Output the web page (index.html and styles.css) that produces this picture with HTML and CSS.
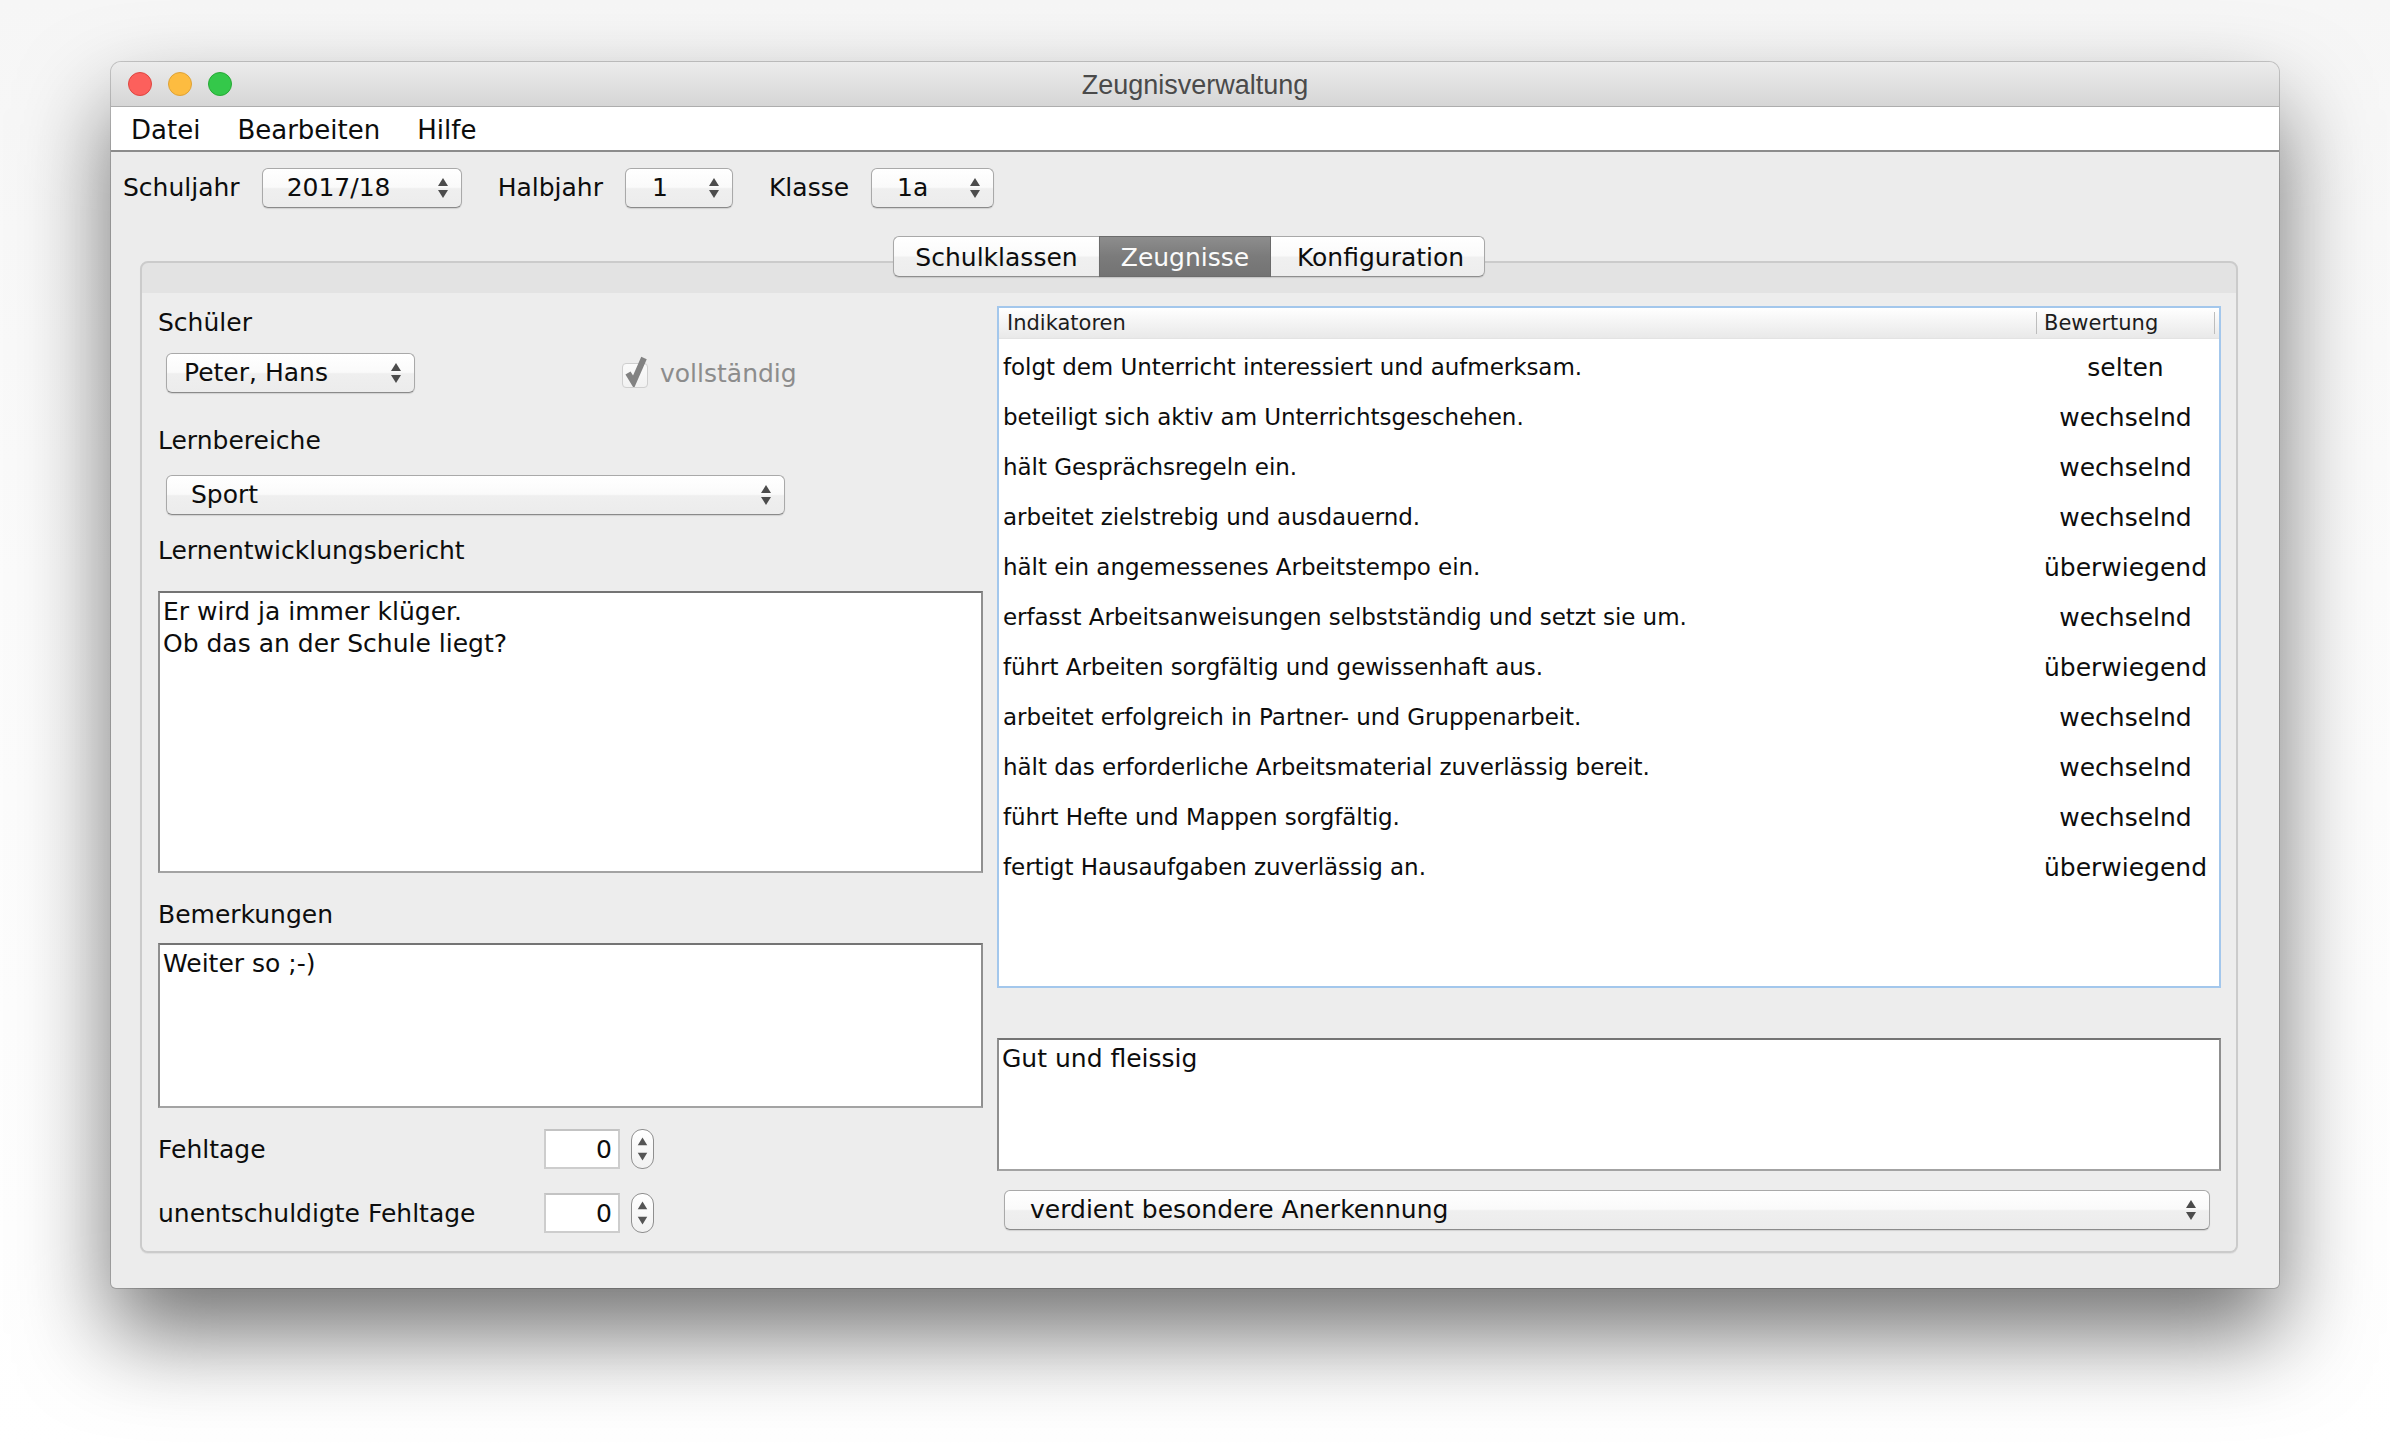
FILE: index.html
```html
<!DOCTYPE html>
<html lang="de">
<head>
<meta charset="utf-8">
<title>Zeugnisverwaltung</title>
<link rel="stylesheet" href="styles.css">
</head>
<body>
<div class="stage">
  <div class="window">
    <div class="titlebar">
      <div class="lights">
        <span class="light red"></span>
        <span class="light yellow"></span>
        <span class="light green"></span>
      </div>
      <div class="title">Zeugnisverwaltung</div>
      <div class="spacer"></div>
    </div>
    <div class="menubar">
      <span class="menu-item">Datei</span>
      <span class="menu-item">Bearbeiten</span>
      <span class="menu-item">Hilfe</span>
    </div>
    <div class="toolbar">
      <span class="tb-label">Schuljahr</span>
      <div class="combo combo-year"><span class="combo-text">2017/18</span><svg class="arrows" viewBox="0 0 10 20"><path d="M0 8 L5 0 L10 8 Z M0 12 L10 12 L5 20 Z"/></svg></div>
      <span class="tb-label">Halbjahr</span>
      <div class="combo combo-half"><span class="combo-text">1</span><svg class="arrows" viewBox="0 0 10 20"><path d="M0 8 L5 0 L10 8 Z M0 12 L10 12 L5 20 Z"/></svg></div>
      <span class="tb-label">Klasse</span>
      <div class="combo combo-class"><span class="combo-text">1a</span><svg class="arrows" viewBox="0 0 10 20"><path d="M0 8 L5 0 L10 8 Z M0 12 L10 12 L5 20 Z"/></svg></div>
    </div>
    <div class="tabpane">
      <div class="tabs">
        <span class="tab tab-first">Schulklassen</span>
        <span class="tab tab-active">Zeugnisse</span>
        <span class="tab tab-last">Konfiguration</span>
      </div>
      <div class="panel">
        <div class="panel-body">
          <div class="leftcol">
            <div class="label lbl-schueler">Schüler</div>
            <div class="row-schueler">
              <div class="combo combo-student"><span class="combo-text">Peter, Hans</span><svg class="arrows" viewBox="0 0 10 20"><path d="M0 8 L5 0 L10 8 Z M0 12 L10 12 L5 20 Z"/></svg></div>
              <div class="check">
                <span class="checkbox"><svg class="checkmark" viewBox="0 0 24 32"><path d="M4 18 L9.5 27 L20 3" /></svg></span>
                <span class="check-label">vollständig</span>
              </div>
            </div>
            <div class="label lbl-lern">Lernbereiche</div>
            <div class="combo combo-sport"><span class="combo-text">Sport</span><svg class="arrows" viewBox="0 0 10 20"><path d="M0 8 L5 0 L10 8 Z M0 12 L10 12 L5 20 Z"/></svg></div>
            <div class="label lbl-bericht">Lernentwicklungsbericht</div>
            <div class="textarea ta-bericht">Er wird ja immer klüger.<br>Ob das an der Schule liegt?</div>
            <div class="label lbl-bem">Bemerkungen</div>
            <div class="textarea ta-bem">Weiter so ;-)</div>
            <div class="spin-row spin-first">
              <span class="spin-label">Fehltage</span>
              <span class="spin-field">0</span>
              <span class="stepper"><svg viewBox="0 0 22 40"><path d="M6 16 L11 8 L16 16 Z M6 24 L16 24 L11 32 Z"/></svg></span>
            </div>
            <div class="spin-row spin-second">
              <span class="spin-label">unentschuldigte Fehltage</span>
              <span class="spin-field">0</span>
              <span class="stepper"><svg viewBox="0 0 22 40"><path d="M6 16 L11 8 L16 16 Z M6 24 L16 24 L11 32 Z"/></svg></span>
            </div>
          </div>
          <div class="rightcol">
            <div class="table">
              <div class="thead">
                <span class="th th-ind">Indikatoren</span>
                <span class="th th-val">Bewertung</span>
                <span class="th th-end"></span>
              </div>
              <div class="tbody">
                <div class="tr"><span class="td-ind">folgt dem Unterricht interessiert und aufmerksam.</span><span class="td-val">selten</span></div>
                <div class="tr"><span class="td-ind">beteiligt sich aktiv am Unterrichtsgeschehen.</span><span class="td-val">wechselnd</span></div>
                <div class="tr"><span class="td-ind">hält Gesprächsregeln ein.</span><span class="td-val">wechselnd</span></div>
                <div class="tr"><span class="td-ind">arbeitet zielstrebig und ausdauernd.</span><span class="td-val">wechselnd</span></div>
                <div class="tr"><span class="td-ind">hält ein angemessenes Arbeitstempo ein.</span><span class="td-val">überwiegend</span></div>
                <div class="tr"><span class="td-ind">erfasst Arbeitsanweisungen selbstständig und setzt sie um.</span><span class="td-val">wechselnd</span></div>
                <div class="tr"><span class="td-ind">führt Arbeiten sorgfältig und gewissenhaft aus.</span><span class="td-val">überwiegend</span></div>
                <div class="tr"><span class="td-ind">arbeitet erfolgreich in Partner- und Gruppenarbeit.</span><span class="td-val">wechselnd</span></div>
                <div class="tr"><span class="td-ind">hält das erforderliche Arbeitsmaterial zuverlässig bereit.</span><span class="td-val">wechselnd</span></div>
                <div class="tr"><span class="td-ind">führt Hefte und Mappen sorgfältig.</span><span class="td-val">wechselnd</span></div>
                <div class="tr"><span class="td-ind">fertigt Hausaufgaben zuverlässig an.</span><span class="td-val">überwiegend</span></div>
              </div>
            </div>
            <div class="textarea ta-gut">Gut und fleissig</div>
            <div class="combo combo-verdient"><span class="combo-text">verdient besondere Anerkennung</span><svg class="arrows" viewBox="0 0 10 20"><path d="M0 8 L5 0 L10 8 Z M0 12 L10 12 L5 20 Z"/></svg></div>
          </div>
        </div>
      </div>
    </div>
  </div>
</div>
</body>
</html>
```

FILE: styles.css
```css
* { box-sizing: border-box; }

html, body {
  margin: 0;
  padding: 0;
  background: #ffffff;
}

body {
  width: 2390px;
  height: 1448px;
  overflow: hidden;
  font-family: "DejaVu Sans", "Noto Sans", sans-serif;
  color: #0d0d0d;
}

.stage {
  padding: 62px 0 0 111px;
  background: linear-gradient(#f6f6f6, #fbfbfb 40%, #ffffff);
  height: 1448px;
}

.window {
  width: 2168px;
  height: 1226px;
  background: #ececec;
  border-radius: 10px 10px 5px 5px;
  overflow: hidden;
  box-shadow: 0 46px 90px rgba(0,0,0,0.55), 0 0 0 1px rgba(0,0,0,0.18);
  display: flex;
  flex-direction: column;
}

/* title bar */
.titlebar {
  height: 45px;
  flex: none;
  display: grid;
  grid-template-columns: 1fr auto 1fr;
  align-items: center;
  background: linear-gradient(#ececec, #d6d6d6);
  border-bottom: 1px solid #adadad;
}

.lights {
  display: flex;
  gap: 16px;
  padding-left: 17px;
}

.light {
  width: 24px;
  height: 24px;
  border-radius: 50%;
  display: block;
}
.red { background: #fc605c; border: 1px solid #de4640; }
.yellow { background: #fdbc40; border: 1px solid #dea236; }
.green { background: #34c84a; border: 1px solid #27a935; }

.title {
  font-family: "Liberation Sans", Arial, sans-serif;
  font-size: 27px;
  color: #4a4a4a;
  padding-top: 3px;
}

/* menu bar */
.menubar {
  height: 45px;
  flex: none;
  background: #ffffff;
  border-bottom: 2px solid #8c8c8c;
  display: flex;
  align-items: center;
  gap: 37px;
  padding-left: 20px;
  padding-top: 2px;
  font-size: 26px;
  color: #0d0d0d;
}

/* toolbar */
.toolbar {
  flex: none;
  display: flex;
  align-items: center;
  padding: 16px 0 0 12px;
}

.tb-label {
  font-size: 25px;
  line-height: 30px;
  margin-right: 22px;
}

.toolbar .combo { margin-right: 36px; }

/* combos */
.combo {
  height: 40px;
  border: 1px solid #a9a9a9;
  border-bottom-color: #8a8a8a;
  border-radius: 6px;
  background: linear-gradient(#ffffff, #fafafa 48%, #efefef 52%, #ececec);
  box-shadow: 0 1px 1px rgba(0,0,0,0.12);
  display: flex;
  align-items: center;
  justify-content: space-between;
  font-size: 25px;
  color: #0d0d0d;
}

.combo-text { line-height: 30px; }

.arrows {
  width: 10px;
  height: 20px;
  fill: #4c4c4c;
  flex: none;
}

.combo-year { width: 200px; padding: 0 13px 0 24px; }
.combo-half { width: 108px; padding: 0 13px 0 26px; }
.combo-class { width: 123px; padding: 0 13px 0 25px; }

/* tabs */
.tabpane {
  margin: 28px 41px 0 29px;
  display: flex;
  flex-direction: column;
}

.tabs {
  display: flex;
  justify-content: center;
  position: relative;
  z-index: 2;
  margin-bottom: -16px;
}

.tab {
  height: 41px;
  display: flex;
  align-items: center;
  justify-content: center;
  font-size: 25px;
  padding-top: 1px;
  background: linear-gradient(#ffffff, #fafafa 48%, #f0f0f0 52%, #ededed);
  border: 1px solid #a8a8a8;
  border-bottom-color: #8e8e8e;
  box-shadow: 0 1px 1px rgba(0,0,0,0.12);
}

.tab-first {
  width: 206px;
  border-radius: 6px 0 0 6px;
  border-right: none;
}

.tab-active {
  width: 172px;
  color: #fbfbfb;
  background: linear-gradient(#8d8d8d, #7b7b7b 50%, #737373);
  border-color: #6c6c6c;
}

.tab-last {
  width: 214px;
  border-radius: 0 6px 6px 0;
  border-left: none;
  padding-left: 6px;
}

.panel {
  height: 992px;
  border: 2px solid #cbcbcb;
  border-radius: 8px;
  background: #e3e3e3;
  padding-top: 30px;
  display: flex;
  flex-direction: column;
  box-shadow: 0 1px 1px rgba(0,0,0,0.06);
}

.panel-body {
  flex: 1;
  background: #ededed;
  display: flex;
  gap: 14px;
  padding: 0 15px 0 16px;
  border-radius: 0 0 6px 6px;
}

/* left column */
.leftcol {
  width: 825px;
  flex: none;
  display: flex;
  flex-direction: column;
}

.label {
  font-size: 25px;
  line-height: 30px;
}

.lbl-schueler { margin-top: 15px; }

.row-schueler {
  margin-top: 15px;
  display: flex;
  align-items: center;
  height: 40px;
}

.combo-student {
  width: 249px;
  margin-left: 8px;
  padding: 0 13px 0 17px;
}

.check {
  display: flex;
  align-items: center;
  margin-left: 207px;
  gap: 12px;
}

.checkbox {
  width: 26px;
  height: 25px;
  border: 1px solid #cfcfcf;
  border-radius: 4px;
  background: linear-gradient(#fbfbfb, #f1f1f1);
  position: relative;
  margin-top: 4px;
}

.checkmark {
  position: absolute;
  left: 1px;
  top: -9px;
  width: 24px;
  height: 32px;
  fill: none;
  stroke: #828282;
  stroke-width: 6px;
  stroke-linejoin: miter;
  stroke-linecap: butt;
}

.check-label {
  font-size: 25px;
  line-height: 30px;
  color: #8c8c8c;
  margin-top: 2px;
}

.lbl-lern { margin-top: 33px; }

.combo-sport {
  width: 619px;
  margin-left: 8px;
  margin-top: 19px;
  padding: 0 13px 0 24px;
}

.lbl-bericht { margin-top: 21px; }

.textarea {
  background: #ffffff;
  border: 2px solid #8f8f8f;
  border-top-color: #747474;
  border-bottom-color: #a3a3a3;
  font-size: 25px;
  line-height: 32px;
  padding: 3px 3px 2px;
  color: #0d0d0d;
}

.ta-bericht { margin-top: 25px; height: 282px; }

.lbl-bem { margin-top: 27px; }

.ta-bem { margin-top: 13px; height: 165px; }

.spin-row {
  display: flex;
  align-items: center;
  height: 40px;
}

.spin-first { margin-top: 21px; }
.spin-second { margin-top: 24px; }

.spin-label {
  width: 386px;
  font-size: 25px;
  line-height: 30px;
  padding-top: 2px;
}

.spin-field {
  width: 76px;
  height: 40px;
  background: #ffffff;
  border: 2px solid #cdcdcd;
  border-top-color: #c3c3c3;
  font-size: 25px;
  line-height: 38px;
  text-align: right;
  padding-right: 6px;
}

.stepper {
  width: 23px;
  height: 40px;
  margin-left: 11px;
  border: 1px solid #8f8f8f;
  border-radius: 11px;
  background: linear-gradient(#ffffff, #f1f1f1);
  display: block;
}

.stepper svg {
  display: block;
  width: 21px;
  height: 38px;
  fill: #555;
}

/* right column */
.rightcol {
  flex: 1;
  display: flex;
  flex-direction: column;
}

.table {
  margin-top: 13px;
  height: 682px;
  border: 2px solid #a3c7ec;
  background: #ffffff;
  display: flex;
  flex-direction: column;
}

.thead {
  height: 31px;
  display: grid;
  grid-template-columns: 1fr 179px 4px;
  background: linear-gradient(#ffffff, #f6f6f6 40%, #e9e9e9);
  border-bottom: 1px solid #e3e3e3;
  align-items: center;
}

.th {
  font-size: 21px;
  color: #1d1d1d;
  height: 22px;
  line-height: 22px;
}

.th-ind { padding-left: 8px; }

.th-val {
  border-left: 1px solid #bdbdbd;
  border-right: 1px solid #bdbdbd;
  padding-left: 7px;
}

.tbody {
  padding-top: 3px;
}

.tr {
  height: 50px;
  display: grid;
  grid-template-columns: 1fr 179px 4px;
  align-items: center;
}

.td-ind {
  font-size: 23px;
  letter-spacing: -0.05px;
  padding-left: 4px;
}

.td-val {
  font-size: 25px;
  text-align: center;
}

.ta-gut {
  margin-top: 50px;
  height: 133px;
}

.combo-verdient {
  margin: 19px 11px 0 7px;
  padding: 0 13px 0 25px;
}
```
